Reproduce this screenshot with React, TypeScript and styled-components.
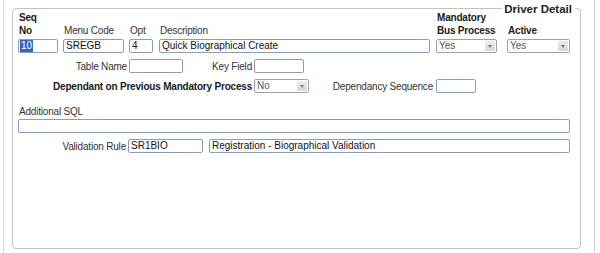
import styled, { createGlobalStyle } from 'styled-components';

const GlobalStyle = createGlobalStyle`
  html, body {
    margin: 0;
    padding: 0;
    background: #ffffff;
  }
  body {
    font-family: "Liberation Sans", Arial, sans-serif;
    font-size: 10px;
    color: #000000;
  }
`;

const Panel = styled.div`
  width: 592px;
  height: 253px;
  margin-left: 3px;
  border-left: 1px solid #d6d6d6;
  border-right: 1px solid #d6d6d6;
  padding-top: 8px;
  box-sizing: border-box;
`;

const Frame = styled.div`
  position: relative;
  margin-left: 8px;
  width: 569px;
  height: 241px;
  box-sizing: border-box;
  border: 1px solid #c3c3c3;
  border-radius: 4px;
  padding: 2px 0 0 5px;
`;

const Legend = styled.div`
  position: absolute;
  top: -6px;
  right: 5px;
  background: #ffffff;
  padding: 0 3px 0 2px;
  font-weight: bold;
  font-size: 11.5px;
  line-height: 12px;
  color: #222;
`;

const HeaderRow = styled.div`
  display: flex;
  align-items: flex-end;
`;

const Column = styled.div<{ $w: number; $ml?: number }>`
  width: ${p => p.$w}px;
  margin-left: ${p => p.$ml ?? 0}px;
  display: flex;
  flex-direction: column;
`;

const ColLabel = styled.div<{ $bold?: boolean }>`
  font-weight: ${p => (p.$bold ? 'bold' : 'normal')};
  line-height: 13px;
  letter-spacing: -0.2px;
  white-space: nowrap;
  padding-left: 1px;
  margin-bottom: 2px;
  color: ${p => (p.$bold ? '#1a1a1a' : '#333')};
`;

const Row = styled.div<{ $mt: number }>`
  display: flex;
  align-items: center;
  margin-top: ${p => p.$mt}px;
`;

const Label = styled.div<{ $w: number; $bold?: boolean; $gap?: number }>`
  width: ${p => p.$w}px;
  margin-right: ${p => p.$gap ?? 2}px;
  text-align: right;
  white-space: nowrap;
  letter-spacing: -0.2px;
  font-weight: ${p => (p.$bold ? 'bold' : 'normal')};
  color: ${p => (p.$bold ? '#1a1a1a' : '#333')};
  line-height: 13px;
`;

const BlockLabel = styled.div<{ $mt: number }>`
  margin-top: ${p => p.$mt}px;
  padding-left: 1px;
  line-height: 13px;
  letter-spacing: -0.2px;
  color: #333;
`;

const Field = styled.div<{ $w: number; $ml?: number }>`
  width: ${p => p.$w}px;
  margin-left: ${p => p.$ml ?? 0}px;
  height: 14px;
  box-sizing: border-box;
  border: 1px solid #8a9db5;
  border-radius: 2px;
  background: #ffffff;
  padding-left: 2px;
  font-size: 10px;
  line-height: 12px;
  white-space: nowrap;
  overflow: hidden;
  color: #111;
`;

const Selected = styled.span`
  background: #3166c5;
  color: #ffffff;
  margin-left: -1px;
  padding: 0 1px;
  display: inline-block;
  line-height: 12px;
`;

const SelectBox = styled.div<{ $w: number }>`
  width: ${p => p.$w}px;
  height: 14px;
  box-sizing: border-box;
  border: 1px solid #9aa3ad;
  border-radius: 2px;
  background: #ffffff;
  display: flex;
  align-items: stretch;
  font-size: 10px;
  line-height: 12px;
  color: #555;
`;

const SelectText = styled.div`
  flex: 1;
  padding-left: 2px;
`;

const SelectArrow = styled.div`
  width: 10px;
  margin: 1px;
  background: linear-gradient(#ececec, #d8d8d8);
  display: flex;
  align-items: center;
  justify-content: center;
  &::after {
    content: '';
    border-left: 2.5px solid transparent;
    border-right: 2.5px solid transparent;
    border-top: 3px solid #777;
  }
`;

function Select({ value, w }: { value: string; w: number }) {
  return (
    <SelectBox $w={w}>
      <SelectText>{value}</SelectText>
      <SelectArrow />
    </SelectBox>
  );
}

export default function App() {
  return (
    <>
      <GlobalStyle />
      <Panel>
        <Frame>
          <Legend>Driver Detail</Legend>

          <HeaderRow>
            <Column $w={40}>
              <ColLabel $bold>Seq<br />No</ColLabel>
              <Field $w={40}><Selected>10</Selected></Field>
            </Column>
            <Column $w={61} $ml={5}>
              <ColLabel>Menu Code</ColLabel>
              <Field $w={61}>SREGB</Field>
            </Column>
            <Column $w={24} $ml={5}>
              <ColLabel>Opt</ColLabel>
              <Field $w={24}>4</Field>
            </Column>
            <Column $w={271} $ml={6}>
              <ColLabel>Description</ColLabel>
              <Field $w={271}>Quick Biographical Create</Field>
            </Column>
            <Column $w={61} $ml={6}>
              <ColLabel $bold>Mandatory<br />Bus Process</ColLabel>
              <Select value="Yes" w={61} />
            </Column>
            <Column $w={63} $ml={10}>
              <ColLabel $bold>Active</ColLabel>
              <Select value="Yes" w={63} />
            </Column>
          </HeaderRow>

          <Row $mt={6}>
            <Label $w={109}>Table Name</Label>
            <Field $w={54}></Field>
            <Label $w={69}>Key Field</Label>
            <Field $w={50}></Field>
          </Row>

          <Row $mt={6}>
            <Label $w={234} $bold>Dependant on Previous Mandatory Process</Label>
            <Select value="No" w={55} />
            <Label $w={124} $gap={3}>Dependancy Sequence</Label>
            <Field $w={40}></Field>
          </Row>

          <BlockLabel $mt={12}>Additional SQL</BlockLabel>
          <Row $mt={1}>
            <Field $w={552}></Field>
          </Row>

          <Row $mt={6}>
            <Label $w={108}>Validation Rule</Label>
            <Field $w={75}>SR1BIO</Field>
            <Field $w={361} $ml={6}>Registration - Biographical Validation</Field>
          </Row>
        </Frame>
      </Panel>
    </>
  );
}
